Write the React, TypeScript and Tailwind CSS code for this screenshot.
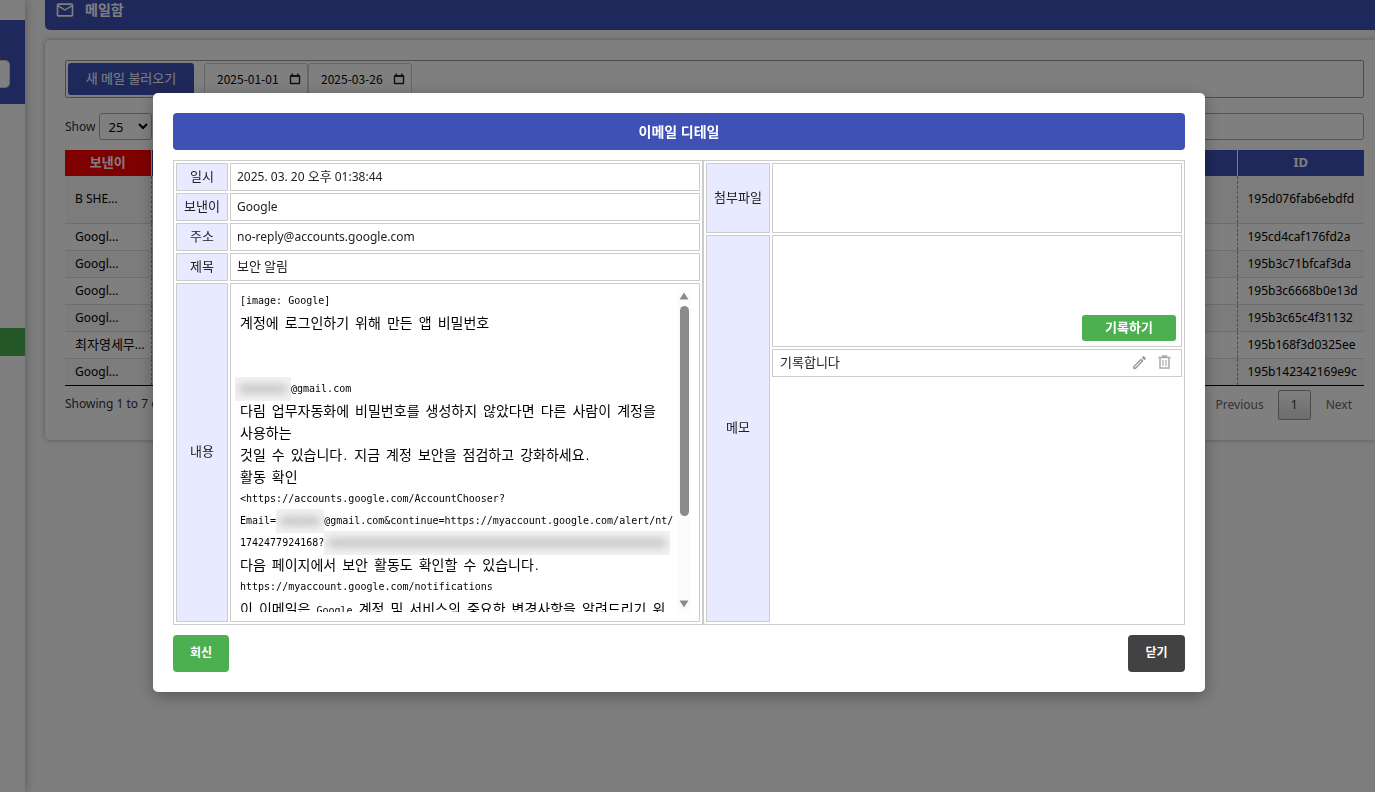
import { ReactNode } from "react";
import { MdMailOutline, MdOutlineEdit } from "react-icons/md";

type Mail = { from: string; id: string };

const mails: Mail[] = [
  { from: "B SHE...", id: "195d076fab6ebdfd" },
  { from: "Googl...", id: "195cd4caf176fd2a" },
  { from: "Googl...", id: "195b3c71bfcaf3da" },
  { from: "Googl...", id: "195b3c6668b0e13d" },
  { from: "Googl...", id: "195b3c65c4f31132" },
  { from: "최자영세무...", id: "195b168f3d0325ee" },
  { from: "Googl...", id: "195b142342169e9c" },
];

const details = [
  { label: "일시", value: "2025. 03. 20 오후 01:38:44" },
  { label: "보낸이", value: "Google" },
  { label: "주소", value: "no-reply@accounts.google.com" },
  { label: "제목", value: "보안 알림" },
];

// Hangul is drawn a size larger than the latin text around it
function Mixed({ children, size }: { children: string; size: string }) {
  return (
    <>
      {children.split(/([가-힣]+)/).map((part, i) =>
        i % 2 === 1 ? (
          <span key={i} className={size}>
            {part}
          </span>
        ) : (
          part
        )
      )}
    </>
  );
}

function Masked({ className }: { className: string }) {
  return (
    <span className={`h-6 shrink-0 overflow-hidden bg-[#f3f3f3] ${className}`}>
      <span className="mx-1 mt-2 block h-2 bg-[#bdbdbd] blur-[5px]" />
    </span>
  );
}

function Line({ children }: { children?: ReactNode }) {
  return (
    <div className="flex h-[22px] items-center whitespace-pre">
      {typeof children === "string" ? (
        <span>
          <Mixed size="text-[14px]">{children}</Mixed>
        </span>
      ) : (
        children
      )}
    </div>
  );
}

function CalendarIcon() {
  return (
    <svg width="12" height="12" viewBox="0 0 12 12" className="shrink-0">
      <path
        d="M1.5 3h9v7.5h-9z"
        fill="none"
        stroke="#222"
        strokeWidth="1.4"
        strokeLinejoin="round"
      />
      <path d="M1 2h10v2H1zM2.500 .5h1.500v2h-1.500zM8 .5h1.500v2H8z" fill="#222" />
    </svg>
  );
}

function DateBox({ label, value }: { label: string; value: string }) {
  return (
    <label className="flex h-8 w-[104px] items-center rounded-[3px] border border-[#ccc] pr-2 pl-3">
      <input
        type="text"
        aria-label={label}
        defaultValue={value}
        className="w-[72px] font-['Noto_Sans_CJK_KR',sans-serif] text-xs text-black outline-none"
      />
      <CalendarIcon />
    </label>
  );
}

function TrashIcon() {
  return (
    <svg
      width="13"
      height="14"
      viewBox="0 0 13 14"
      fill="none"
      stroke="currentColor"
      strokeWidth="1.5"
    >
      <path d="M.5 2.500h12M4.500 2.500V1h4v1.500M2 2.500v10.500h9V2.500" />
      <path d="M5 5v6M8 5v6" strokeWidth="1.2" />
    </svg>
  );
}

function Sidebar() {
  return (
    <aside className="flex h-screen w-[25px] shrink-0 flex-col bg-white shadow-[0_0_10px_rgba(0,0,0,0.3)]">
      <div className="mt-5 flex h-[84px] items-end bg-[#3f51b5] pb-4">
        <input
          type="text"
          aria-label="검색"
          className="h-7 w-[10px] rounded-r-[5px] border border-l-0 border-[#ccc] bg-white"
        />
      </div>
      <div className="mt-56 h-7 bg-[#4caf50]" />
    </aside>
  );
}

function MailTable() {
  return (
    <table className="w-full table-fixed border-collapse border-b border-black text-black">
      <thead>
        <tr className="h-[26px] text-[13px] text-white">
          <th className="w-[86px] border-r border-white bg-[red]">보낸이</th>
          <th className="bg-[#3f51b5]" />
          <th className="w-[127px] border-l border-white bg-[#3f51b5]">ID</th>
        </tr>
      </thead>
      <tbody>
        {mails.map((mail, i) => (
          <tr
            key={mail.id}
            className={`border-b border-[#ddd] last:border-black ${i === 0 ? "h-[47px]" : "h-[27px]"} ${
              i % 2 === 0 ? "bg-[#f9f9f9]" : ""
            }`}
          >
            <td className="border-r border-dashed border-r-[#999] pl-[10px] whitespace-nowrap">
              <Mixed size="text-[13px]">{mail.from}</Mixed>
            </td>
            <td />
            <td className="border-l border-dashed border-l-[#999] pl-[10px]">{mail.id}</td>
          </tr>
        ))}
      </tbody>
    </table>
  );
}

function MailList() {
  return (
    <main className="min-w-0 flex-1 pl-5">
      <h1 className="flex h-[30px] items-start gap-[10px] rounded-bl-[5px] bg-[#3f51b5] pl-[10px] text-[14px] leading-5 font-bold text-white">
        <MdMailOutline size={20} />
        메일함
      </h1>
      <section className="mt-[10px] h-[400px] rounded-l-[5px] bg-white p-5 pr-[11px] shadow-[0_0_5px_rgba(0,0,0,0.3)]">
        <div className="flex h-[38px] items-center rounded-[2px] border border-[#999] px-[2px]">
          <button className="h-8 w-[126px] rounded-[3px] bg-[#3f51b5] text-[13px] text-white">
            새 메일 불러오기
          </button>
          <div className="ml-[10px] flex">
            <DateBox label="시작일" value="2025-01-01" />
            <DateBox label="종료일" value="2025-03-26" />
          </div>
        </div>
        <div className="mt-[15px] flex items-center justify-between">
          <label className="flex items-center gap-1 text-[#333]">
            Show
            <select
              defaultValue="25"
              className="h-[27px] w-[53px] rounded-[3px] border border-[#aaa] pl-1 text-[13px] text-black"
            >
              <option>25</option>
              <option>50</option>
            </select>
          </label>
          <input
            type="search"
            aria-label="검색어"
            className="h-[27px] w-1/2 rounded-[3px] border border-[#aaa]"
          />
        </div>
        <div className="mt-[10px]">
          <MailTable />
        </div>
        <div className="mt-1 flex items-start justify-between text-[#333]">
          <div className="pt-[6px]">Showing 1 to 7 of 7 entries</div>
          <div className="flex items-center text-[#666]">
            <button className="px-[14px]">Previous</button>
            <button className="h-[30px] w-[33px] rounded-[2px] border border-[#979797] bg-linear-to-b from-white to-[#dcdcdc] text-[#333]">
              1
            </button>
            <button className="pr-3 pl-[15px]">Next</button>
          </div>
        </div>
      </section>
    </main>
  );
}

function Scrollbar() {
  return (
    <div className="flex w-[14px] shrink-0 flex-col items-center bg-[#fcfcfc] pt-[2px] pb-1">
      <svg width="10" height="8" viewBox="0 0 10 8" fill="#8b8b8b">
        <path d="M5 .5 9.500 7.500H.5z" />
      </svg>
      <div className="mt-[6px] h-[210px] w-[9px] rounded-full bg-[#8b8b8b]" />
      <svg width="10" height="8" viewBox="0 0 10 8" fill="#8b8b8b" className="mt-auto">
        <path d="M5 7.500.5.5h9z" />
      </svg>
    </div>
  );
}

function MailBody() {
  return (
    <div className="flex h-[322px] font-['DejaVu_Sans_Mono','Noto_Sans_CJK_KR',monospace] text-[10px] text-black">
      <div className="min-w-0 flex-1 overflow-hidden pl-[5px]">
        <Line>[image: Google]</Line>
        <Line>계정에 로그인하기 위해 만든 앱 비밀번호</Line>
        <Line />
        <Line />
        <Line>
          <Masked className="-ml-[5px] w-14" />
          @gmail.com
        </Line>
        <Line>다림 업무자동화에 비밀번호를 생성하지 않았다면 다른 사람이 계정을</Line>
        <Line>사용하는</Line>
        <Line>것일 수 있습니다. 지금 계정 보안을 점검하고 강화하세요.</Line>
        <Line>활동 확인</Line>
        <Line>{"<https://accounts.google.com/AccountChooser?"}</Line>
        <Line>
          Email=
          <Masked className="w-12" />
          @gmail.com&amp;continue=https://myaccount.google.com/alert/nt/
        </Line>
        <Line>
          1742477924168?
          <Masked className="w-[346px]" />
        </Line>
        <Line>다음 페이지에서 보안 활동도 확인할 수 있습니다.</Line>
        <Line>https://myaccount.google.com/notifications</Line>
        <Line>이 이메일은 Google 계정 및 서비스의 중요한 변경사항을 알려드리기 위</Line>
      </div>
      <Scrollbar />
    </div>
  );
}

function DetailTable() {
  return (
    <table className="h-[465px] w-[530px] border-separate border-spacing-[2px] border border-[#ccc]">
      <tbody>
        {details.map((row) => (
          <tr key={row.label}>
            <th className="h-7 w-[52px] border border-[#ccc] bg-[#e8eaff] text-[13px] font-normal">
              {row.label}
            </th>
            <td className="h-7 border border-[#ccc] px-[6px]">
              <Mixed size="text-[13px]">{row.value}</Mixed>
            </td>
          </tr>
        ))}
        <tr>
          <th className="border border-[#ccc] bg-[#e8eaff] text-[13px] font-normal">내용</th>
          <td className="border border-[#ccc] pr-2 pb-[2px] pl-1">
            <MailBody />
          </td>
        </tr>
      </tbody>
    </table>
  );
}

function MemoTable() {
  return (
    <table className="h-[465px] flex-1 border-separate border-spacing-[2px] border border-[#ccc] text-[13px]">
      <tbody>
        <tr>
          <th className="h-[70px] w-16 border border-[#ccc] bg-[#e8eaff] font-normal">첨부파일</th>
          <td className="h-[70px] border border-[#ccc]" />
        </tr>
        <tr>
          <th rowSpan={3} className="border border-[#ccc] bg-[#e8eaff] font-normal">
            메모
          </th>
          <td className="h-[112px] border border-[#ccc] px-[5px]">
            <div className="flex h-[100px] flex-col">
              <textarea aria-label="메모" className="w-full flex-1 resize-none outline-none" />
              <button className="h-[26px] w-[94px] self-end rounded-[3px] bg-[#4caf50] font-bold text-white">
                기록하기
              </button>
            </div>
          </td>
        </tr>
        <tr>
          <td className="h-7 border border-[#ccc] px-[7px]">
            <div className="flex items-center">
              <span className="flex-1">기록합니다</span>
              <button aria-label="수정" className="text-[#999]">
                <MdOutlineEdit size={17} />
              </button>
              <button aria-label="삭제" className="mr-[3px] ml-[10px] text-[#aaa]">
                <TrashIcon />
              </button>
            </div>
          </td>
        </tr>
        <tr>
          <td />
        </tr>
      </tbody>
    </table>
  );
}

function MailModal() {
  return (
    <div className="fixed inset-0 flex items-center justify-center bg-black/50 pr-[17px] pb-2">
      <div
        role="dialog"
        aria-label="이메일 디테일"
        className="w-full max-w-[1052px] rounded-[5px] bg-white p-5 shadow-[0_4px_16px_rgba(0,0,0,0.3)]"
      >
        <h2 className="rounded-[4px] bg-[#3f51b5] text-center text-[14px] leading-[37px] font-bold text-white">
          이메일 디테일
        </h2>
        <div className="mt-[10px] flex">
          <DetailTable />
          <MemoTable />
        </div>
        <div className="mt-[10px] flex justify-between text-xs font-bold text-white">
          <button className="h-[37px] w-14 rounded-[4px] bg-[#4caf50]">회신</button>
          <button className="h-[37px] w-[57px] rounded-[4px] bg-[#424242]">닫기</button>
        </div>
      </div>
    </div>
  );
}

export default function App() {
  return (
    <div className="flex min-h-screen overflow-hidden bg-[#fafafa] font-['Noto_Sans','Noto_Sans_CJK_KR',sans-serif] text-xs text-[#222]">
      <Sidebar />
      <MailList />
      <MailModal />
    </div>
  );
}
